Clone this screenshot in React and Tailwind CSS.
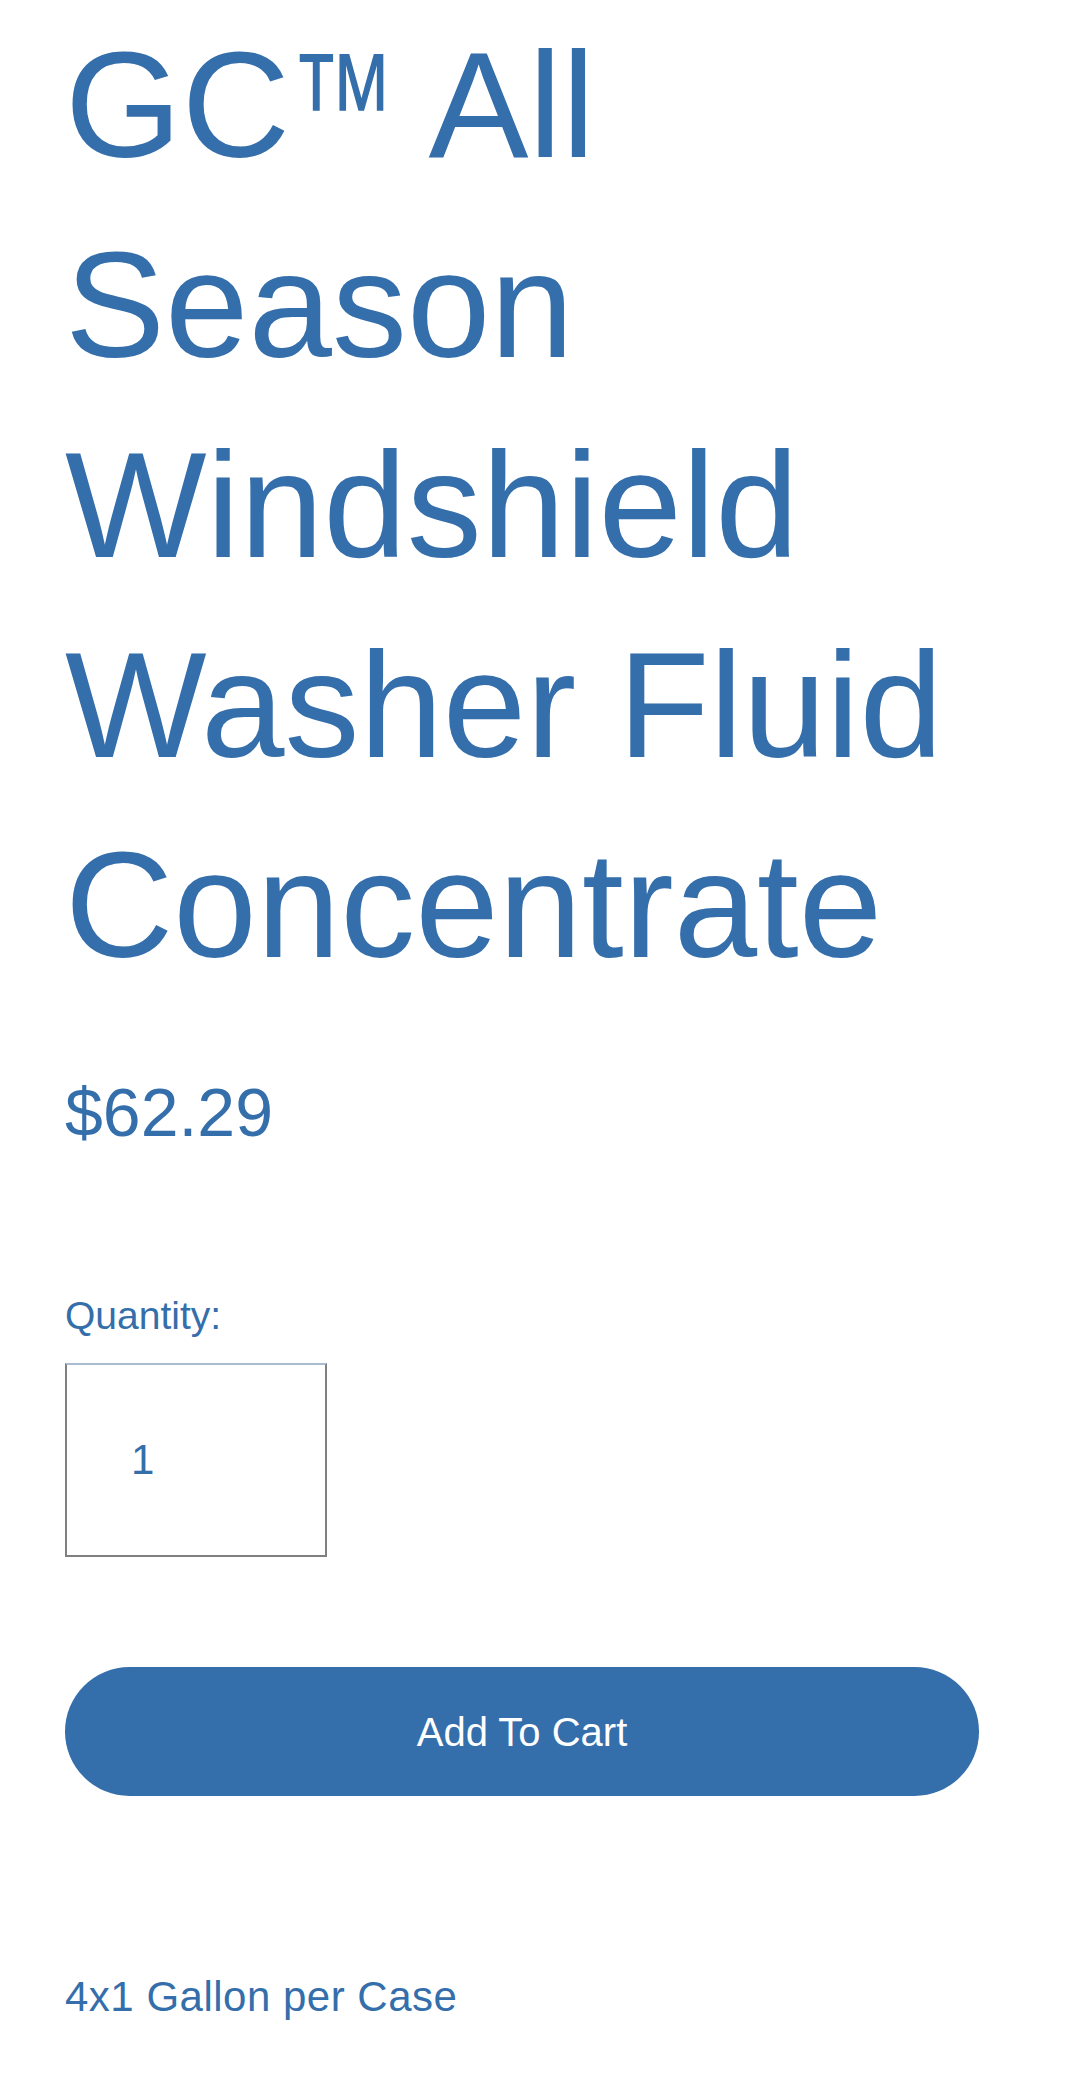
import React, { useState } from 'react';

const App = () => {
  const [quantity, setQuantity] = useState('1');

  return (
    <div className="min-h-[2086px] bg-white font-['Liberation_Sans',Arial,sans-serif] text-[#346eab]">
      <div className="ml-[65px] w-[914px] pt-[5px]">
        <h1 className="text-[150px] font-normal leading-[200px]">
          GC
          <span className="mr-[-45px] inline-block origin-left scale-x-[0.7]">™</span>{' '}
          All Season Windshield Washer Fluid Concentrate
        </h1>

        <p className="mt-[67px] text-[68px] leading-[80px]">$62.29</p>

        <label
          htmlFor="quantity"
          className="mt-[140px] block text-[39px] leading-[48px]"
        >
          Quantity:
        </label>
        <input
          id="quantity"
          type="text"
          value={quantity}
          onChange={(e) => setQuantity(e.target.value)}
          className="mt-[23px] block h-[194px] w-[262px] border-2 border-[#808080] border-t-[#a9bcd0] bg-white pl-[64px] text-[42px] text-[#346eab] outline-none"
        />

        <button
          type="button"
          className="mt-[110px] flex h-[129px] w-[914px] items-center justify-center rounded-full bg-[#346eab] text-[40px] text-white"
        >
          Add To Cart
        </button>

        <p className="mt-[176px] text-[42px] leading-[50px] tracking-[0.5px]">
          4x1 Gallon per Case
        </p>
      </div>
    </div>
  );
};

export default App;
